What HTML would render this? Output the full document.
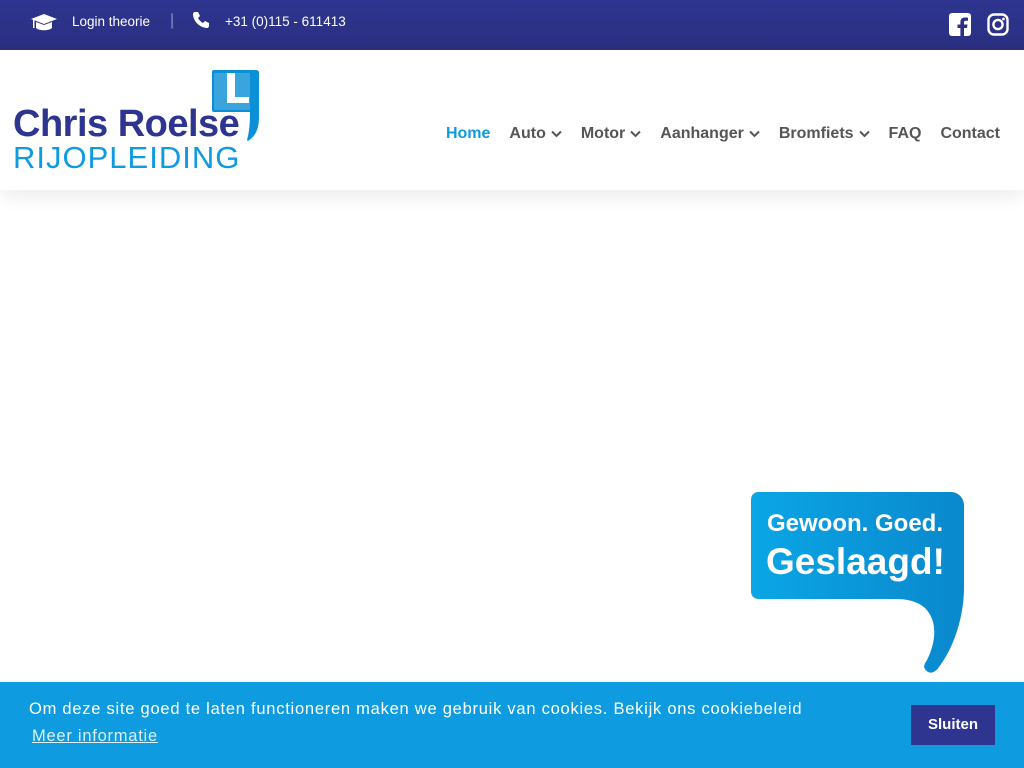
<!DOCTYPE html>
<html><head><meta charset="utf-8"><style>
*{margin:0;padding:0;box-sizing:border-box}
body{width:1024px;height:768px;overflow:hidden;background:#fff;font-family:"Liberation Sans",sans-serif;position:relative}
.top{height:50px;background:linear-gradient(#2e3590,#2a2f80);color:#fff;font-size:13.5px;position:relative}
.top span{position:absolute;top:14px}
.hdr{height:140px;background:#fff;box-shadow:0 6px 18px rgba(0,0,0,.08);position:relative;z-index:2}
.nav{position:absolute;right:24px;display:flex;font-size:16px;font-weight:bold;color:#555}
.nav div{margin-left:19px;display:flex;align-items:center}
.nav svg{margin-left:5px}
.cookie{position:absolute;left:0;top:682px;width:1024px;height:86px;background:#0e9be0;color:#fff;font-size:16.5px;letter-spacing:.75px}
.btn{position:absolute;left:911px;top:23px;width:84px;height:40px;background:#2e3590;color:#fff;font-weight:bold;font-size:15px;text-align:center;line-height:40px;letter-spacing:0}
</style></head><body>
<div class="top">
<svg style="position:absolute;left:30px;top:13px" width="28" height="20" viewBox="0 0 28 20"><path d="M14 1L1 6l13 5 13-5z" fill="#fff"/><path d="M6 9v6c3 3 13 3 16 0V9l-8 3z" fill="#fff"/><rect x="3" y="7" width="1.5" height="8" fill="#fff"/></svg>
<span style="left:72px">Login theorie</span>
<span style="left:170px;top:12px;color:#8a8fc0;font-size:16px">|</span>
<svg style="position:absolute;left:192px;top:11px" width="18" height="18" viewBox="0 0 18 18"><path d="M3 1l3 0 2 4-2 2c1 2 3 4 5 5l2-2 4 2v3c0 1-1 2-2 2C8 17 1 10 1 3c0-1 1-2 2-2z" fill="#fff"/></svg>
<span style="left:225px">+31 (0)115 - 611413</span>
<svg style="position:absolute;left:949px;top:13px" width="22" height="23" viewBox="0 0 22 23"><rect x="0" y="0" width="22" height="23" rx="3" fill="#fff"/><path d="M15 23v-8h3l.5-3.5H15V9.5c0-1 .4-1.7 1.8-1.7H19V4.7c-.5-.1-1.7-.2-3-.2-3 0-4.6 1.7-4.6 4.8v2.2H8.5V15h2.9v8z" fill="#2b3085"/></svg>
<svg style="position:absolute;left:987px;top:13px" width="22" height="23" viewBox="0 0 22 23"><rect x="1.5" y="1.5" width="19" height="20" rx="5.5" fill="none" stroke="#fff" stroke-width="2.4"/><circle cx="11" cy="11.5" r="4.6" fill="none" stroke="#fff" stroke-width="2.4"/><circle cx="16.5" cy="6" r="1.4" fill="#fff"/></svg>
</div>
<div class="hdr">
<svg style="position:absolute;left:210px;top:18px" width="52" height="76" viewBox="0 0 52 76"><path d="M4 2H46Q49 2 49 5V50Q49 66 38 73L37 72Q40 62 40 44H4Q2 44 2 42V4Q2 2 4 2Z" fill="#0b8fd6"/><rect x="4" y="5" width="36" height="37" fill="#3aa5dc"/><rect x="17" y="5" width="8" height="30" fill="#fff"/><rect x="17" y="29" width="22" height="6" fill="#fff"/></svg>
<div style="position:absolute;left:13px;top:53px;font-size:38px;font-weight:bold;color:#2e3590;letter-spacing:-.5px">Chris Roelse</div>
<div style="position:absolute;left:13px;top:90px;font-size:31px;color:#0e9be0;letter-spacing:1px">RIJOPLEIDING</div>
<div class="nav" style="top:75px">
<div style="color:#0e9be0">Home</div>
<div>Auto<svg width="11" height="8" viewBox="0 0 11 8"><path d="M1 1.5l4.5 4.5 4.5-4.5" stroke="#555" stroke-width="2" fill="none"/></svg></div>
<div>Motor<svg width="11" height="8" viewBox="0 0 11 8"><path d="M1 1.5l4.5 4.5 4.5-4.5" stroke="#555" stroke-width="2" fill="none"/></svg></div>
<div>Aanhanger<svg width="11" height="8" viewBox="0 0 11 8"><path d="M1 1.5l4.5 4.5 4.5-4.5" stroke="#555" stroke-width="2" fill="none"/></svg></div>
<div>Bromfiets<svg width="11" height="8" viewBox="0 0 11 8"><path d="M1 1.5l4.5 4.5 4.5-4.5" stroke="#555" stroke-width="2" fill="none"/></svg></div>
<div>FAQ</div>
<div>Contact</div>
</div>
</div>
<svg style="position:absolute;left:751px;top:492px" width="213" height="183" viewBox="0 0 213 183"><defs><linearGradient id="g" x1="0" x2="1"><stop offset="0" stop-color="#0aa6e6"/><stop offset="1" stop-color="#0a88cc"/></linearGradient></defs><path d="M8 0h192c7 0 13 6 13 13v82c0 30-10 60-25 80-4 6-10 8-14 2-2-3 0-6 2-9 10-20 10-40-2-52-8-7-18-9-30-9H8c-5 0-8-3-8-8V8c0-5 3-8 8-8z" fill="url(#g)"/>
<text x="16" y="39" font-family="Liberation Sans" font-weight="bold" font-size="24" fill="#fff">Gewoon. Goed.</text>
<text x="15" y="82" font-family="Liberation Sans" font-weight="bold" font-size="37" fill="#fff">Geslaagd!</text></svg>
<div class="cookie">
<div style="position:absolute;left:29px;top:18px">Om deze site goed te laten functioneren maken we gebruik van cookies. Bekijk ons cookiebeleid</div>
<div style="position:absolute;left:32px;top:45px;text-decoration:underline;color:#dff1fb">Meer informatie</div>
<div class="btn">Sluiten</div>
</div>
</body></html>
